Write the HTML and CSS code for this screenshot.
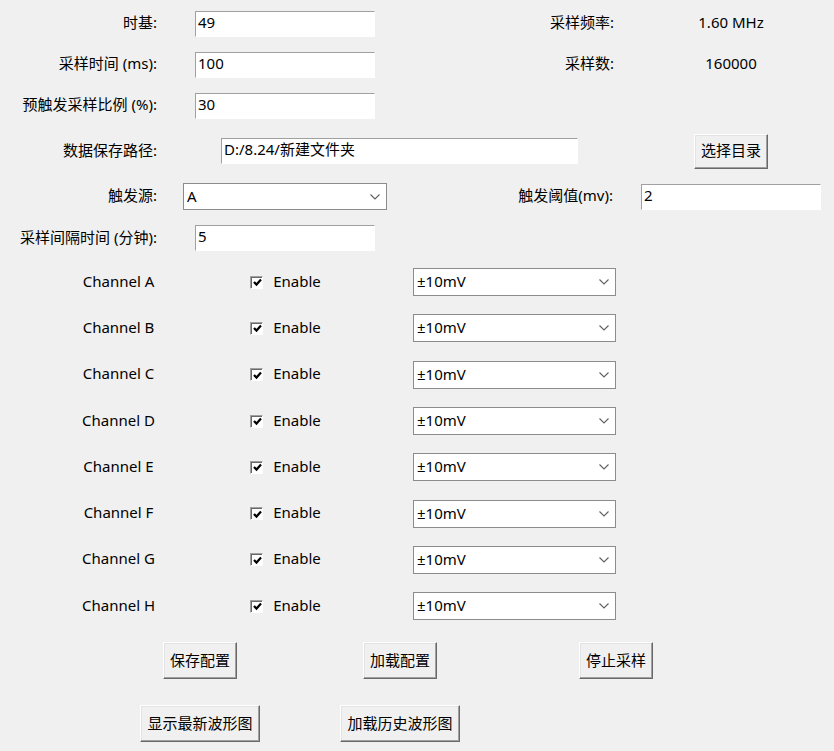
FILE: index.html
```html
<!DOCTYPE html>
<html>
<head>
    <meta charset="UTF-8">
    <title>采样设置</title>
    <link rel="stylesheet" href="styles.css">
</head>
<body>
    <div class="settings">
        <span class="lbl">时基:</span>
        <div class="entry">49</div>
        <span class="lbl">采样频率:</span>
        <span class="val">1.60 MHz</span>

        <span class="lbl">采样时间 (ms):</span>
        <div class="entry">100</div>
        <span class="lbl">采样数:</span>
        <span class="val">160000</span>

        <span class="lbl">预触发采样比例 (%):</span>
        <div class="entry">30</div>
        <span></span>
        <span></span>

        <span class="lbl">数据保存路径:</span>
        <div class="entry path">D:/8.24/新建文件夹</div>
        <button class="btn btn-dir">选择目录</button>

        <span class="lbl">触发源:</span>
        <div class="combo combo-src">
            <span>A</span>
            <svg width="10" height="6" viewBox="0 0 10 6"><polyline points="0.5,0.5 5,5 9.5,0.5" fill="none" stroke="#606060" stroke-width="1.1"/></svg>
        </div>
        <span class="lbl">触发阈值(mv):</span>
        <div class="entry val">2</div>

        <span class="lbl">采样间隔时间 (分钟):</span>
        <div class="entry">5</div>
    </div>

    <div class="channels" id="channels"></div>

    <div class="actions">
        <button class="btn">保存配置</button>
        <button class="btn">加载配置</button>
        <button class="btn">停止采样</button>
        <button class="btn">显示最新波形图</button>
        <button class="btn">加载历史波形图</button>
    </div>

    <script>
        // 通道行
        const list = document.getElementById('channels');
        ['A', 'B', 'C', 'D', 'E', 'F', 'G', 'H'].forEach(ch => {
            list.insertAdjacentHTML('beforeend',
                '<span class="ch-name">Channel ' + ch + '</span>' +
                '<label class="check"><span class="box"><svg width="9" height="9" viewBox="0 0 9 9"><polyline points="1,4 3.5,6.6 8,1.6" fill="none" stroke="#000" stroke-width="2.2"/></svg></span><span>Enable</span></label>' +
                '<div class="combo combo-ch"><span>±10mV</span>' +
                '<svg width="10" height="6" viewBox="0 0 10 6"><polyline points="0.5,0.5 5,5 9.5,0.5" fill="none" stroke="#606060" stroke-width="1.1"/></svg></div>');
        });
    </script>
</body>
</html>
```

FILE: styles.css
```css
html, body { margin: 0; overflow: hidden; }
body {
    background: #f0f0f0;
    font-family: "Noto Sans", "Noto Sans CJK SC", sans-serif;
    font-size: 15px;
    line-height: 20px;
    color: #000;
}

.settings {
    display: grid;
    grid-template-columns: 166px 238px 218px 212px;
    grid-template-rows: 41px 41px 41px 50px 41px 42px;
    align-items: center;
    padding-top: 3px;
}
.lbl { justify-self: end; padding: 0 9px 3px 0; white-space: nowrap; }
.settings > .lbl:nth-child(4n+3) { padding-right: 8px; }
.val { justify-self: center; margin-left: 6px; padding-bottom: 3px; }

.entry {
    justify-self: center;
    width: 180px; height: 26px; box-sizing: border-box;
    background: #fff;
    border: 1px solid #fff;
    border-top-color: #a0a0a0; border-left-color: #a0a0a0;
    padding: 0 0 0 2px;
    line-height: 21px;
    white-space: nowrap;
}
.entry.val { padding-bottom: 0; }
.entry.path { grid-column: 2 / 4; width: 357px; margin-left: 11px; }

.combo {
    justify-self: center;
    display: flex; align-items: center; justify-content: space-between;
    box-sizing: border-box;
    background: #fff;
    border: 1px solid #8c8c8c;
    padding: 0 6px 2px 3px;
}
.combo svg { margin-top: 2px; }
.combo-src { width: 204px; height: 27px; }
.combo-ch { width: 203px; height: 28px; }

.btn {
    font: inherit; color: #000;
    background: #f0f0f0;
    height: 37px; padding: 0 6px 2px; margin: 0;
    border: 1px solid;
    border-color: #fff #696969 #696969 #fff;
    box-shadow: inset -1px -1px #a0a0a0, inset 1px 1px #e3e3e3;
    justify-self: center;
}
.btn-dir { grid-column: 4; height: 35px; margin-left: 6px; }

.channels {
    display: grid;
    grid-template-columns: 237px 97px 361px;
    grid-auto-rows: 46.3px;
    align-items: center;
    justify-items: center;
}
.ch-name { padding-bottom: 3px; }
.check { display: flex; align-items: center; gap: 10px; }
.check > span:last-child { padding-bottom: 3px; }
.box {
    width: 13px; height: 13px; box-sizing: border-box;
    background: #fff;
    border: 1px solid #fff;
    border-top-color: #a0a0a0; border-left-color: #a0a0a0;
    box-shadow: inset 1px 1px #696969;
    display: flex; align-items: center; justify-content: center;
}
.box svg { margin: 1px 0 0 1px; }

.actions {
    display: grid;
    grid-template-columns: 200px 200px 232px;
    grid-auto-rows: 63px;
    align-items: center;
    margin-left: 100px;
}
```
